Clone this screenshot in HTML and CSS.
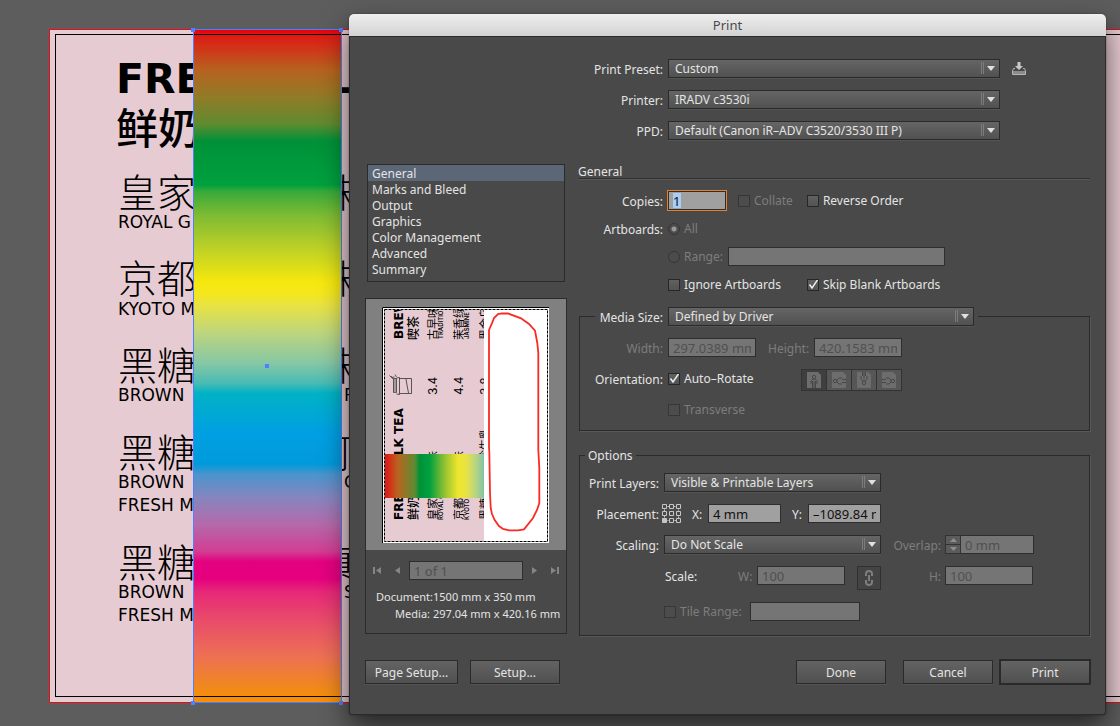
FILE: index.html
```html
<!DOCTYPE html>
<html lang="en">
<head>
<meta charset="utf-8">
<title>Print</title>
<link rel="stylesheet" href="styles.css">
</head>
<body>
<main class="desktop">
  <svg class="canvas" aria-label="Menu artwork">
    <defs>
      <linearGradient id="rainbow" x1="0" y1="30" x2="0" y2="703" gradientUnits="userSpaceOnUse">
        <stop offset="0" stop-color="#e60012"/><stop offset=".01" stop-color="#de1c14"/>
        <stop offset=".06" stop-color="#b6631f"/><stop offset=".1" stop-color="#917b27"/>
        <stop offset=".14" stop-color="#5f8b30"/><stop offset=".165" stop-color="#009138"/>
        <stop offset=".23" stop-color="#00a03e"/><stop offset=".24" stop-color="#38aa3a"/>
        <stop offset=".275" stop-color="#7dbb33"/><stop offset=".32" stop-color="#b8cf28"/>
        <stop offset=".375" stop-color="#f6e80d"/><stop offset=".39" stop-color="#f4e71c"/>
        <stop offset=".41" stop-color="#e8e344"/><stop offset=".45" stop-color="#bdd57e"/>
        <stop offset=".495" stop-color="#86c7a5"/><stop offset=".525" stop-color="#48bbb4"/>
        <stop offset=".54" stop-color="#00b2c5"/><stop offset=".6" stop-color="#009fe3"/>
        <stop offset=".645" stop-color="#009ada"/><stop offset=".66" stop-color="#4a94cd"/>
        <stop offset=".695" stop-color="#8785bf"/><stop offset=".735" stop-color="#b469aa"/>
        <stop offset=".775" stop-color="#d23d92"/><stop offset=".79" stop-color="#e4007f"/>
        <stop offset=".815" stop-color="#e5007f"/><stop offset=".835" stop-color="#e72878"/>
        <stop offset=".88" stop-color="#e94e69"/><stop offset=".93" stop-color="#ed7054"/>
        <stop offset=".98" stop-color="#f18a18"/><stop offset="1" stop-color="#fa9000"/>
      </linearGradient>
    </defs>
    <rect class="board" x="50" y="30" width="2400" height="673"/>
    <g class="title">
      <text x="116" y="93">FRE</text>
      <text class="title-cn" x="116" y="144">鲜奶</text>
      <text x="324" y="93">L</text>
    </g>
    <g class="dish">
      <text x="118" y="207">皇家</text><text x="318" y="207">味</text>
      <text x="118" y="293">京都</text><text x="318" y="293">味</text>
      <text x="118" y="380">黑糖</text><text x="318" y="380">味</text>
      <text x="118" y="467">黑糖</text><text x="314" y="467">可</text>
      <text x="118" y="577">黑糖</text><text x="318" y="577">真</text>
    </g>
    <g class="caption">
      <text x="118" y="228">ROYAL G</text>
      <text x="118" y="315">KYOTO M</text>
      <text x="118" y="401">BROWN</text><text x="344" y="401">P</text>
      <text x="118" y="488">BROWN</text><text x="344" y="488">C</text>
      <text x="118" y="511">FRESH M</text>
      <text x="118" y="598">BROWN</text><text x="344" y="598">S</text>
      <text x="118" y="621">FRESH M</text>
    </g>
    <rect class="swatch" x="193" y="30" width="149" height="673"/>
    <rect class="frame" x="55.5" y="34.5" width="2300" height="662"/>
    <rect class="bleed" x="49.5" y="29.5" width="2400" height="673"/>
    <rect class="selection" x="193.5" y="29.5" width="148" height="673"/>
    <g class="handle">
      <rect x="191" y="28" width="4" height="4"/><rect x="339" y="28" width="4" height="4"/>
      <rect x="191" y="701" width="4" height="4"/><rect x="339" y="701" width="4" height="4"/>
      <rect x="265" y="364" width="4" height="4"/>
    </g>
  </svg>

  <section class="dialog" role="dialog" aria-labelledby="dialog-title">
    <h1 class="titlebar" id="dialog-title">Print</h1>
    <form class="body">
      <div class="presets">
        <div class="row">
          <label class="lead" for="preset">Print Preset:</label>
          <span class="select wide"><select id="preset"><option>Custom</option></select><svg class="arrow" viewBox="0 0 19 17"><path class="sep" d="M1.500 2v12M3.500 2v12"/><path class="tri" d="M7 6h8l-4 5z"/></svg></span>
          <button class="save" type="button" aria-label="Save preset"><svg width="14" height="14" viewBox="0 0 14 14"><path d="M5.500 0h3v4H11L7 8 3 4h2.500z" fill="#c8c8c8"/><path d="M3 6.500H1.500L.5 9v3.500h13V9l-1-2.500H11" fill="none" stroke="#b5b5b5"/><path d="M1 9h12v3H1z" fill="#8b8b8b"/></svg></button>
        </div>
        <div class="row">
          <label class="lead" for="printer">Printer:</label>
          <span class="select wide"><select id="printer"><option>IRADV c3530i</option></select><svg class="arrow" viewBox="0 0 19 17"><path class="sep" d="M1.500 2v12M3.500 2v12"/><path class="tri" d="M7 6h8l-4 5z"/></svg></span>
        </div>
        <div class="row">
          <label class="lead" for="ppd">PPD:</label>
          <span class="select wide"><select id="ppd"><option>Default (Canon iR–ADV C3520/3530 III P)</option></select><svg class="arrow" viewBox="0 0 19 17"><path class="sep" d="M1.500 2v12M3.500 2v12"/><path class="tri" d="M7 6h8l-4 5z"/></svg></span>
        </div>
      </div>

      <div class="columns">
        <div class="side">
          <ul class="sections">
            <li><button class="section current" type="button">General</button></li>
            <li><button class="section" type="button">Marks and Bleed</button></li>
            <li><button class="section" type="button">Output</button></li>
            <li><button class="section" type="button">Graphics</button></li>
            <li><button class="section" type="button">Color Management</button></li>
            <li><button class="section" type="button">Advanced</button></li>
            <li><button class="section" type="button">Summary</button></li>
          </ul>
          <div class="preview">
            <div class="stage">
              <svg class="sheet" width="167" height="236" viewBox="0 0 167 236" aria-label="Page preview">
                <defs>
                  <linearGradient id="band"><stop offset="0" stop-color="#df1418"/><stop offset=".13" stop-color="#b9641f"/><stop offset=".3" stop-color="#5f8b30"/><stop offset=".35" stop-color="#009138"/><stop offset=".45" stop-color="#00a03e"/><stop offset=".6" stop-color="#90c132"/><stop offset=".74" stop-color="#f0e62c"/><stop offset=".82" stop-color="#e8e344"/><stop offset=".92" stop-color="#b6d384"/><stop offset="1" stop-color="#80c5a5"/></linearGradient>
                  <clipPath id="art"><rect x="3" y="3" width="99" height="231"/></clipPath>
                </defs>
                <rect width="167" height="236" fill="#fff"/>
                <path d="M.5 236V.5H167" fill="none" stroke="#000"/>
                <g clip-path="url(#art)">
                  <rect x="3" y="3" width="99" height="231" fill="#e6cbd2"/>
                  <g transform="rotate(-90)">
                    <g class="mini-title"><text x="-213" y="21">FRESH MILK TEA</text><text x="-32" y="21">BREW</text></g>
                    <g class="mini-cn strong"><text x="-213" y="36">鲜奶</text><text x="-33" y="36">喫茶</text></g>
                    <g class="mini-cn">
                      <text x="-213" y="55">皇家</text><text x="-155" y="55">味</text><text x="-33" y="55">古早味</text>
                      <text x="-213" y="81">京都</text><text x="-155" y="81">味</text><text x="-33" y="81">茉香绿</text>
                      <text x="-213" y="107">黑糖</text><text x="-154" y="107">珍牛乳</text><text x="-33" y="107">黑金乌</text>
                    </g>
                    <g class="mini-price"><text x="-88" y="55">3.4</text><text x="-88" y="81">4.4</text><text x="-88" y="107">3.8</text></g>
                    <g class="mini-caption"><text x="-213" y="61">ROYAL G</text><text x="-32" y="61">TRADITION</text><text x="-213" y="87">KYOTO M</text><text x="-32" y="87">JASMINE G</text></g>
                  </g>
                  <path d="M11.500 71.500v14h3v-14zM14.500 71l3-.5v17l-3-.5M17.500 71.500h12v15h-12M24 72l1 6 1.500 8M11 72l-2-3M7.500 68.500l2 2 3-.5M13 67.500l1.500 2.500" fill="none" stroke="#333" stroke-width=".8"/>
                  <path d="M12.500 72v14M13.500 72v14" stroke="#777" stroke-width=".6"/>
                  <rect x="3" y="147" width="99" height="44" fill="url(#band)"/>
                </g>
                <rect x="2.500" y="2.500" width="163" height="232" fill="none" stroke="#000" stroke-dasharray="3 1"/>
                <path d="M107 23L110.300 15.300 112 11 116 7 120 6.300 126 6.500 139 11.300 147 17 153 23.700 155.300 36 156.300 46V143L157.300 161V196L155 203 151 211 142 222.300 136 223.300H127L121 222 117 219 112.700 213 110 207 108.700 201 108 186 107.300 145 107 140Z" fill="none" stroke="#fb2a22" stroke-width="1.800"/>
              </svg>
            </div>
            <div class="pager">
              <button class="nav" type="button" disabled aria-label="First"><svg width="9" height="9" viewBox="0 0 9 9"><path d="M0 1h2v7H0zM8 1v7L3 4.500z"/></svg></button>
              <button class="nav" type="button" disabled aria-label="Previous"><svg width="9" height="9" viewBox="0 0 9 9"><path d="M7 1v7L2 4.500z"/></svg></button>
              <input class="field page" type="text" value="1 of 1" aria-label="Page" disabled>
              <button class="nav" type="button" disabled aria-label="Next"><svg width="9" height="9" viewBox="0 0 9 9"><path d="M2 1v7l5-3.500z"/></svg></button>
              <button class="nav" type="button" disabled aria-label="Last"><svg width="9" height="9" viewBox="0 0 9 9"><path d="M1 1v7l5-3.500zM7 1h2v7H7z"/></svg></button>
            </div>
            <dl class="facts">
              <dt>Document:</dt><dd>1500 mm x 350 mm</dd>
              <dt>Media:</dt><dd>297.04 mm x 420.16 mm</dd>
            </dl>
          </div>
        </div>

        <div class="settings">
          <h2 class="heading">General</h2>
          <div class="general">
            <div class="row">
              <label class="lead" for="copies">Copies:</label>
              <span class="field copies focused"><input id="copies" type="text" value="1"></span>
              <label class="check off collate"><input type="checkbox" disabled>Collate</label>
              <label class="check reverse"><input type="checkbox">Reverse Order</label>
            </div>
            <div class="row">
              <span class="lead">Artboards:</span>
              <label class="check off"><input type="radio" name="boards" checked disabled>All</label>
            </div>
            <div class="row">
              <span class="lead"></span>
              <label class="check off"><input type="radio" name="boards" disabled>Range:</label>
              <input class="field range" type="text" aria-label="Range" disabled>
            </div>
            <div class="row">
              <span class="lead"></span>
              <label class="check ignore"><input type="checkbox">Ignore Artboards</label>
              <label class="check"><input type="checkbox" checked>Skip Blank Artboards</label>
            </div>
          </div>

          <fieldset class="group media">
            <legend>
              <label class="media-label" for="media">Media Size:</label>
              <span class="select medium"><select id="media"><option>Defined by Driver</option></select><svg class="arrow" viewBox="0 0 19 17"><path class="sep" d="M1.500 2v12M3.500 2v12"/><path class="tri" d="M7 6h8l-4 5z"/></svg></span>
            </legend>
            <div class="row">
              <label class="lead off" for="width">Width:</label>
              <input class="field size" id="width" type="text" value="297.0389 mm" disabled>
              <label class="off height" for="height">Height:</label>
              <input class="field size" id="height" type="text" value="420.1583 mm" disabled>
            </div>
            <div class="row">
              <span class="lead">Orientation:</span>
              <label class="check auto"><input type="checkbox" checked>Auto–Rotate</label>
              <span class="orient">
                <button class="turn on" type="button" disabled aria-label="Portrait"><svg viewBox="0 0 24 20"><path class="paper" d="M5 2h11l3 3v13H5z"/><g class="person"><circle cx="12" cy="7" r="1.700"/><path d="M10.500 18v-4M13.500 18v-4M9 14v-3l2-2h2l2 2v3M10.500 14v-3M13.500 14v-3M12 11v7"/></g></svg></button>
                <button class="turn" type="button" disabled aria-label="Landscape"><svg viewBox="0 0 24 20"><path class="paper" d="M5 2h11l3 3v13H5z"/><g class="person" transform="rotate(-90 12 11)"><circle cx="12" cy="7" r="1.700"/><path d="M10.500 18v-4M13.500 18v-4M9 14v-3l2-2h2l2 2v3"/></g></svg></button>
                <button class="turn" type="button" disabled aria-label="Portrait flipped"><svg viewBox="0 0 24 20"><path class="paper" d="M5 2h11l3 3v13H5z"/><g class="person" transform="rotate(180 12 10)"><circle cx="12" cy="7" r="1.700"/><path d="M10.500 18v-4M13.500 18v-4M9 14v-3l2-2h2l2 2v3M12 11v7"/></g></svg></button>
                <button class="turn" type="button" disabled aria-label="Landscape flipped"><svg viewBox="0 0 24 20"><path class="paper" d="M5 2h11l3 3v13H5z"/><g class="person" transform="rotate(90 12 11)"><circle cx="12" cy="7" r="1.700"/><path d="M10.500 18v-4M13.500 18v-4M9 14v-3l2-2h2l2 2v3"/></g></svg></button>
              </span>
            </div>
            <div class="row">
              <span class="lead"></span>
              <label class="check off"><input type="checkbox" disabled>Transverse</label>
            </div>
          </fieldset>

          <fieldset class="group options">
            <legend>Options</legend>
            <div class="row">
              <label class="lead" for="layers">Print Layers:</label>
              <span class="select narrow"><select id="layers"><option>Visible &amp; Printable Layers</option></select><svg class="arrow" viewBox="0 0 19 17"><path class="sep" d="M1.500 2v12M3.500 2v12"/><path class="tri" d="M7 6h8l-4 5z"/></svg></span>
            </div>
            <div class="row placement">
              <span class="lead">Placement:</span>
              <svg class="anchor" width="19" height="19" viewBox="0 0 19 19"><path d="M2.500 2.500h14v14h-14z" stroke-dasharray="2 1"/><g><path d="M.5.5h4v4h-4zM7.500.5h4v4h-4zM14.500.5h4v4h-4zM.5 7.500h4v4h-4zM7.500 7.500h4v4h-4zM14.500 7.500h4v4h-4zM7.500 14.500h4v4h-4zM14.500 14.500h4v4h-4z" fill="#494949"/><path d="M.5 14.500h4v4h-4z" fill="#c6c6c6"/></g></svg>
              <label class="axis-x" for="x">X:</label>
              <input class="field coord" id="x" type="text" value="4 mm">
              <label class="axis-y" for="y">Y:</label>
              <input class="field coord" id="y" type="text" value="–1089.84 mm">
            </div>
            <div class="row">
              <label class="lead" for="scaling">Scaling:</label>
              <span class="select narrow"><select id="scaling"><option>Do Not Scale</option></select><svg class="arrow" viewBox="0 0 19 17"><path class="sep" d="M1.500 2v12M3.500 2v12"/><path class="tri" d="M7 6h8l-4 5z"/></svg></span>
              <label class="off second" for="overlap">Overlap:</label>
              <span class="spin"><span class="steps"><button type="button" disabled aria-label="Increase"><svg width="7" height="4" viewBox="0 0 7 4"><path d="M0 4h7L3.500 0z"/></svg></button><button type="button" disabled aria-label="Decrease"><svg width="7" height="4" viewBox="0 0 7 4"><path d="M0 0h7L3.500 4z"/></svg></button></span><input class="field" id="overlap" type="text" value="0 mm" disabled></span>
            </div>
            <div class="row">
              <span class="lead"></span>
              <span class="scale">Scale:</span>
              <label class="off across" for="w">W:</label>
              <input class="field size" id="w" type="text" value="100" disabled>
              <button class="link" type="button" disabled aria-label="Constrain proportions"><svg width="10" height="16" viewBox="0 0 10 16"><path d="M2 6V4q0-3 3-3t3 3v2M2 10v2q0 3 3 3t3-3v-2M5 5v6"/></svg></button>
              <label class="off down" for="h">H:</label>
              <input class="field size" id="h" type="text" value="100" disabled>
            </div>
            <div class="row tile">
              <span class="lead"></span>
              <label class="check off"><input type="checkbox" disabled>Tile Range:</label>
              <input class="field tiles" type="text" aria-label="Tile range" disabled>
            </div>
          </fieldset>
        </div>
      </div>

      <div class="footer">
        <button class="btn setup" type="button">Page Setup...</button>
        <button class="btn" type="button">Setup...</button>
        <button class="btn done" type="button">Done</button>
        <button class="btn cancel" type="button">Cancel</button>
        <button class="btn primary" type="button">Print</button>
      </div>
    </form>
  </section>
</main>
</body>
</html>
```
FILE: styles.css
```css
* { box-sizing: border-box; }
body {
  margin: 0;
  background: #5d5d5d;
  color: #e4e4e4;
  font: 12px/16px "Noto Sans", "Open Sans", sans-serif;
}
input, select, button { font: inherit; color: inherit; margin: 0; }
.desktop { position: relative; min-height: 100vh; overflow: hidden; }

/* Artwork behind the dialog */
.canvas { position: absolute; inset: 0; width: 100%; height: 100%; }
.board { fill: #e7cbd2; }
.swatch { fill: url(#rainbow); }
.frame { fill: none; stroke: #000; }
.bleed { fill: none; stroke: #f00a14; }
.selection { fill: none; stroke: #4f80ff; }
.handle { fill: #4f80ff; }
.title { font: 700 41px "DejaVu Sans", sans-serif; }
.title-cn { font: 500 42px "Noto Sans CJK SC", sans-serif; }
.dish { font: 200 39px "Noto Sans CJK SC", sans-serif; }
.caption { font: 400 17px "DejaVu Sans", sans-serif; }

/* Window */
.dialog {
  position: absolute;
  left: 349px;
  right: 14px;
  top: 14px;
  background: #494949;
  border-radius: 5px 5px 3px 3px;
  box-shadow: 0 12px 28px rgba(0, 0, 0, .6), 0 0 2px rgba(0, 0, 0, .4);
}
.titlebar {
  margin: 0;
  height: 23px;
  border-bottom: 1px solid #2b2b2b;
  border-radius: 5px 5px 0 0;
  background: linear-gradient(#efefef, #d2d2d2);
  color: #4a4a4a;
  font-size: 13px;
  font-weight: 400;
  line-height: 22px;
  text-align: center;
}
.body {
  padding: 22px 15px 30px 15px;
  border: solid #2b2b2b;
  border-width: 0 1px 1px;
  border-radius: 0 0 3px 3px;
}
.row { display: flex; align-items: center; height: 19px; white-space: nowrap; }
.row > label:not(.check), .lead, .scale { padding-top: 2px; }
.lead { width: 85px; margin-right: 5px; text-align: right; }
.presets { display: grid; gap: 12px; padding-left: 213px; }
.off { color: #7d7d7d; }

/* Drop-downs */
.select { display: grid; height: 19px; }
.select select {
  grid-area: 1 / 1;
  appearance: none;
  width: 100%;
  height: 19px;
  padding: 0 22px 0 6px;
  border: 1px solid #2a2a2a;
  border-radius: 0;
  background: linear-gradient(#656565, #515151);
  box-shadow: 0 1px #545454;
  line-height: 17px;
}
.arrow { grid-area: 1 / 1; justify-self: end; width: 19px; height: 17px; margin: 1px; pointer-events: none; }
.sep { stroke: #7c7c7c; }
.tri { fill: #e0e0e0; }
.wide { width: 332px; }
.medium { width: 306px; }
.narrow { width: 217px; }
.save { display: grid; margin-left: 12px; padding: 0; border: 0; background: none; }

/* Fields */
.field {
  height: 19px;
  min-width: 0;
  padding: 0 4px;
  border: 1px solid #2e2e2e;
  border-radius: 0;
  background: #a0a0a0;
  color: #111;
  font-size: 13px;
}
.field:disabled { background: #757575; color: #505050; }
.focused { width: 58px; outline: 1px solid #e8802a; display: flex; align-items: center; }
.focused input {
  width: 8px;
  height: 15px;
  padding: 0;
  border: 0;
  outline: 0;
  background: #a9cdf7;
  color: #111;
}
.size { width: 88px; }
.coord { width: 73px; }

/* Tick boxes and radios */
.check { display: flex; align-items: center; }
.check input {
  appearance: none;
  width: 12px;
  height: 12px;
  margin-right: 4px;
  border: 1px solid #272727;
  background: linear-gradient(#616161, #535353);
}
.check input:checked {
  background: url("data:image/svg+xml,%3Csvg xmlns='http://www.w3.org/2000/svg' viewBox='0 0 10 10'%3E%3Cpath d='M1.500 4.500L4 8 9.500 0' fill='none' stroke='%23f0f0f0' stroke-width='1.500'/%3E%3C/svg%3E") center / 10px 10px, linear-gradient(#616161, #535353);
}
.check input:disabled { border-color: #363636; background: #4c4c4c; }
.check input[type="radio"] { border-radius: 50%; }
.check input[type="radio"]:checked { background: radial-gradient(circle, #999 2px, #4c4c4c 3px); }

/* Two columns */
.columns { display: flex; gap: 11px; margin-top: 23px; }
.side { flex: none; width: 202px; }
.sections {
  margin: 1px 2px 0;
  padding: 0 0 4px;
  border: 1px solid #2b2b2b;
  list-style: none;
}
.section {
  display: block;
  width: 100%;
  height: 16px;
  padding: 1px 4px 0;
  border: 0;
  background: none;
  line-height: 16px;
  text-align: left;
}
.current { background: #5b6677; }
.preview { margin-top: 16px; border: 1px solid #2b2b2b; }
.stage { padding: 8px 0 7px 16px; background: #808080; }
.sheet { display: block; }
.mini-title { font: 700 12px "DejaVu Sans", sans-serif; }
.mini-cn { font: 400 11px "Noto Sans CJK SC", sans-serif; }
.strong { font-size: 12px; font-weight: 500; }
.mini-price { font: 400 12px Inter, sans-serif; }
.mini-caption { font: 600 6px Inter, sans-serif; }
.pager { display: flex; align-items: center; gap: 11px; padding: 11px 7px 0; }
.pager .page { flex: 1; width: 0; margin: 0 -4px; }
.nav { display: grid; padding: 0; border: 0; background: none; }
.nav path { fill: #858585; }
.facts {
  display: grid;
  grid-template-columns: 54px 1fr;
  gap: 1px 3px;
  margin: 9px 4px 11px 10px;
  font-size: 11px;
  text-align: right;
  white-space: nowrap;
}
.facts dd { margin: 0; text-align: left; }

.settings { flex: 1; min-width: 0; }
.heading {
  height: 16px;
  margin: 0;
  border-bottom: 1px solid #303030;
  box-shadow: 0 1px #595959;
  font-size: 12px;
  font-weight: 400;
  line-height: 18px;
}
.general { display: grid; gap: 9px; margin: 12px 0 13px; }
.collate { margin-left: 12px; }
.reverse { margin-left: 14px; }
.range { width: 217px; margin-left: 5px; }
.ignore { width: 139px; }

.group { margin: 0 0 0 1px; border: 1px solid #2b2b2b; box-shadow: 1px 1px #595959; }
.group legend { display: flex; align-items: center; height: 19px; }
.media { display: grid; gap: 12px; padding: 12px 0 11px; }
.media legend { gap: 5px; margin-left: 15px; padding: 0 4px 0 1px; }
.media-label { width: 67px; padding-top: 2px; text-align: right; }
.media .lead { width: 83px; }
.media .height { margin: 0 5px 0 12px; }
.auto { width: 133px; }
.orient { display: flex; align-self: flex-start; height: 22px; border: 1px solid #333; background: #333; gap: 1px; }
.turn { width: 24px; height: 20px; padding: 0; border: 0; background: #565656; }
.turn svg { display: block; }
.on { background: #3f3f3f; }
.paper { fill: #6d6d6d; }
.person { fill: none; stroke: #484848; }

.options { display: grid; gap: 12px; margin-top: 15px; padding: 8px 0 14px; }
.options legend { margin-left: 5px; padding: 0 3px; }
.options .lead { width: 79px; }
.placement .lead { margin-right: 3px; }
.anchor { fill: none; stroke: #c6c6c6; }
.axis-x { width: 16px; margin-left: 11px; }
.axis-y { width: 16px; margin-left: 11px; }
.second { width: 60px; margin-right: 4px; text-align: right; }
.spin { display: flex; width: 89px; }
.spin .field { flex: 1; width: 0; border-left: 0; }
.steps { display: grid; width: 16px; height: 19px; gap: 1px; padding: 1px; background: #333; }
.steps button { display: grid; place-items: center; padding: 0; border: 0; background: #5b5b5b; }
.steps path { fill: #8e8e8e; }
.scale { width: 74px; padding-left: 1px; }
.across { width: 19px; }
.link {
  display: grid;
  place-items: center;
  align-self: flex-start;
  width: 24px;
  height: 24px;
  margin-left: 12px;
  padding: 0;
  border: 1px solid #303030;
  background: #444;
}
.link path { fill: none; stroke: #7d7d7d; stroke-width: 2; }
.down { width: 60px; margin-right: 4px; text-align: right; }
.tile { margin-top: 5px; }
.tiles { width: 110px; margin-left: 8px; }

/* Buttons */
.footer { display: flex; gap: 12px; margin-top: 24px; }
.btn {
  min-width: 90px;
  height: 24px;
  padding: 2px 7px 0;
  border: 1px solid #2a2a2a;
  background: linear-gradient(#636363, #505050);
  box-shadow: 0 1px #545454;
}
.setup { min-width: 93px; }
.done { margin-left: auto; }
.cancel { margin-left: 5px; }
.primary { margin-left: -5px; outline: 1px solid #2a2a2a; }
```
